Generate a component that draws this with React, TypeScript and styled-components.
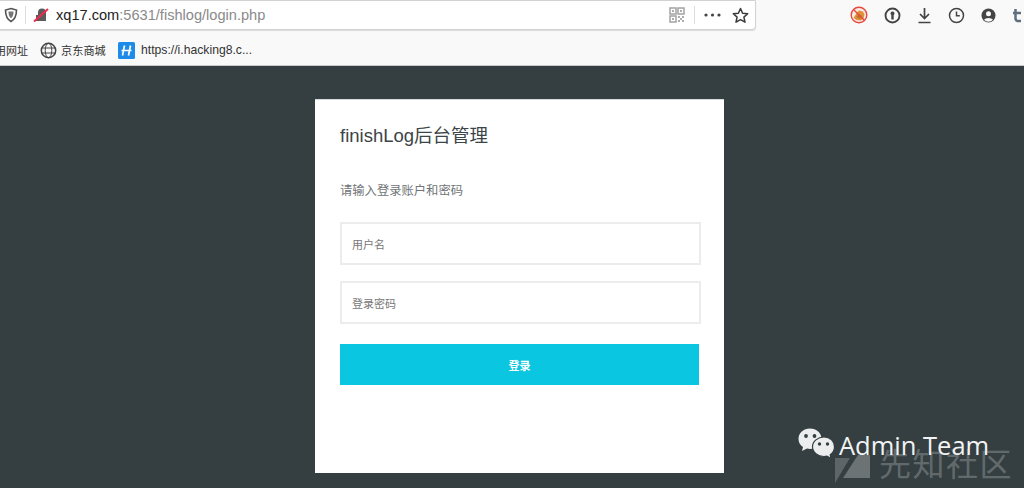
import React from "react";
import styled, { createGlobalStyle } from "styled-components";

const sans = `"Liberation Sans", "Noto Sans CJK SC", sans-serif`;

const Global = createGlobalStyle`
  html, body { margin: 0; padding: 0; width: 1024px; height: 488px; overflow: hidden; background: #353f42; }
  * { box-sizing: border-box; }
  #root { width: 1024px; height: 488px; }
`;

const Page = styled.div`
  position: relative;
  width: 1024px;
  height: 488px;
  display: flex;
  flex-direction: column;
  font-family: ${sans};
  overflow: hidden;
`;

const Chrome = styled.header`
  height: 66px;
  flex: none;
  background: #f9f9f9;
  border-bottom: 1px solid #c9cbcb;
`;

const Toolbar = styled.div`
  height: 33px;
  display: flex;
  align-items: flex-start;
`;

const UrlBar = styled.div`
  width: 759px;
  height: 30px;
  margin-left: -1px;
  background: #fff;
  border: 1px solid #d2d2d2;
  border-radius: 0 0 4px 0;
  box-shadow: 0 1px 1px rgba(0, 0, 0, 0.12);
  display: flex;
  align-items: center;
  padding: 0 6px 0 4px;
`;

const Divider = styled.span<{ $gap: number }>`
  width: 1px;
  height: 18px;
  background: #dcdcdc;
  margin: 0 ${(p) => p.$gap}px;
`;

const Url = styled.div`
  font-size: 14.600px;
  margin-left: 6px;
  color: #8a8a8a;
  flex: 1;
  white-space: nowrap;
  b { font-weight: 400; color: #222; }
`;

const StarSlot = styled.span`
  display: flex;
  margin-left: 11px;
`;

const ToolIcons = styled.div`
  height: 30px;
  display: flex;
  align-items: center;
  gap: 16px;
  margin-left: 94px;
`;

const Bookmarks = styled.div`
  height: 32px;
  display: flex;
  align-items: center;
  padding-top: 2px;
  font-size: 11px;
  color: #333;
  overflow: hidden;
`;

const Bookmark = styled.div<{ $width: number; $gap?: number; $size?: number }>`
  width: ${(p) => p.$width}px;
  flex: none;
  display: flex;
  align-items: center;
  gap: ${(p) => p.$gap ?? 4}px;
  font-size: ${(p) => p.$size ?? 11}px;
  white-space: nowrap;
`;

const ClippedBookmark = styled(Bookmark)`
  margin-left: -16px;
`;

const Main = styled.main`
  flex: 1;
  display: flex;
  justify-content: center;
  align-items: flex-start;
  padding-top: 33px;
  padding-left: 15px;
`;

const Card = styled.section`
  width: 409px;
  height: 374px;
  flex: none;
  background: #fff;
  padding: 25px 24px 0 25px;
  border-top: 1px solid #d8dbdc;
  display: flex;
  flex-direction: column;
`;

const Title = styled.h1`
  margin: 0;
  font-size: 18.500px;
  line-height: 22px;
  font-weight: 400;
  color: #3b4447;
`;

const Hint = styled.p`
  margin: 36px 0 0;
  font-size: 12.300px;
  line-height: 16px;
  color: #6f7476;
`;

const Fields = styled.div`
  margin-top: 23px;
  display: flex;
  flex-direction: column;
  gap: 16px;
`;

const Field = styled.div`
  width: 361px;
  height: 43px;
  border: 2px solid #ebecec;
  display: flex;
  align-items: center;
  padding-left: 10px;
  font-size: 11px;
  color: #777;
`;

const Submit = styled.button`
  width: 359px;
  height: 41px;
  margin-top: 20px;
  border: none;
  background: #0bc6e0;
  color: #fff;
  font-family: ${sans};
  font-size: 11px;
  font-weight: 700;
  padding: 0;
`;

const Watermark = styled.div`
  position: absolute;
  left: 797px;
  top: 425px;
  width: 227px;
  height: 63px;
`;

const Brand = styled.div`
  position: absolute;
  left: 42px;
  top: 4px;
  font-family: "Open Sans", "Noto Sans", sans-serif;
  font-size: 25.500px;
  line-height: 32px;
  color: #f2f3f3;
  white-space: nowrap;
`;

const Site = styled.div`
  position: absolute;
  left: 82px;
  top: 17px;
  font-family: "Noto Sans CJK SC", sans-serif;
  font-size: 32px;
  line-height: 40px;
  letter-spacing: 1.500px;
  color: rgba(255, 255, 255, 0.24);
  white-space: nowrap;
`;

const WeChatBox = styled.div`
  position: absolute;
  left: 1px;
  top: 3px;
  display: flex;
`;

const SiteMarkBox = styled.div`
  position: absolute;
  left: 38px;
  top: 30px;
  display: flex;
`;

const Shield = () => (
  <svg width="14" height="16" viewBox="0 0 14 16">
    <path d="M7 1.500 12.500 3c0 5-1 9-5.500 11.500C2.500 12 1.500 8 1.500 3Z" fill="none" stroke="#555" strokeWidth="1.600" />
    <path d="M4.500 4.500h5c0 3-.5 5.300-2.500 6.800-2-1.500-2.500-3.800-2.500-6.800Z" fill="#777" />
  </svg>
);

const BrokenLock = () => (
  <svg width="17" height="16" viewBox="0 0 17 16">
    <path d="M3 14V8h2V5.500a4 4 0 0 1 8 0V14Z" fill="#5b5b5b" />
    <path d="M1 14.500 15 2" stroke="#f2294f" strokeWidth="2" />
  </svg>
);

const QrCode = () => (
  <svg width="16" height="16" viewBox="0 0 16 16" opacity="0.6">
    <path d="M1 1h6v6H1ZM9 1h6v6H9ZM1 9h6v6H1Z" fill="none" stroke="#666" strokeWidth="1.500" />
    <path d="M9 9h2v2H9ZM13 9h2v2h-2ZM11 11h2v2h-2ZM9 13h2v2H9ZM13 13h2v2h-2ZM3 3h2v2H3ZM11 3h2v2h-2ZM3 11h2v2H3Z" fill="#777" />
  </svg>
);

const Dots = () => (
  <svg width="17" height="4" viewBox="0 0 17 4">
    <circle cx="2" cy="2" r="1.600" fill="#444" />
    <circle cx="8.500" cy="2" r="1.600" fill="#444" />
    <circle cx="15" cy="2" r="1.600" fill="#444" />
  </svg>
);

const Star = () => (
  <svg width="17" height="17" viewBox="0 0 17 17">
    <path d="M8.500 1.500 10.600 6.200 15.700 6.700 11.900 10.100 13 15.200 8.500 12.600 4 15.200 5.100 10.100 1.300 6.700 6.400 6.200Z" fill="none" stroke="#3a3a3a" strokeWidth="1.500" strokeLinejoin="round" />
  </svg>
);

const BlockedExt = () => (
  <svg width="18" height="18" viewBox="0 0 18 18">
    <circle cx="9" cy="9" r="7.500" fill="#f7ece4" />
    <path d="M3.500 12 7 6.500l2-2 4 1 1.500 3-1 4-3 2-4-.5Z" fill="#e0913a" />
    <path d="M6 11l3-3 3 2-2 3Z" fill="#b9772d" />
    <circle cx="9" cy="9" r="7.800" fill="none" stroke="#e8483f" strokeWidth="1.400" />
    <path d="M3.500 3.500l11 11" stroke="#e8483f" strokeWidth="1.400" />
  </svg>
);

const KeyRing = () => (
  <svg width="17" height="17" viewBox="0 0 17 17">
    <circle cx="8.500" cy="8.500" r="7" fill="none" stroke="#444" strokeWidth="1.900" />
    <path d="M8.500 4.500a2 2 0 0 1 1.200 3.600V12.500H7.300V8.100A2 2 0 0 1 8.500 4.500Z" fill="#444" />
  </svg>
);

const Download = () => (
  <svg width="15" height="17" viewBox="0 0 15 17">
    <path d="M7.500 1v10M3 7l4.500 4.500L12 7M1.500 15.500h12" fill="none" stroke="#444" strokeWidth="1.700" />
  </svg>
);

const Clock = () => (
  <svg width="17" height="17" viewBox="0 0 17 17">
    <circle cx="8.500" cy="8.500" r="7" fill="none" stroke="#444" strokeWidth="1.500" />
    <path d="M8.500 4.500v4.300h3.300" fill="none" stroke="#444" strokeWidth="1.500" />
  </svg>
);

const Account = () => (
  <svg width="15" height="15" viewBox="0 0 15 15">
    <circle cx="7.500" cy="7.500" r="7" fill="#444" />
    <circle cx="7.500" cy="5.800" r="2.500" fill="#f9f9f9" />
    <path d="M3 11.700a5 3.200 0 0 1 9 0 6 6 0 0 1-9 0Z" fill="#f9f9f9" />
  </svg>
);

const NextExt = () => (
  <svg width="12" height="15" viewBox="0 0 12 15">
    <path d="M3.500 1v9.500a2.500 2.500 0 0 0 2.500 2.500h3M1 5h8" fill="none" stroke="#5f6f7f" strokeWidth="2.500" />
  </svg>
);

const Globe = () => (
  <svg width="17" height="17" viewBox="0 0 17 17">
    <circle cx="8.500" cy="8.500" r="7.200" fill="none" stroke="#444" strokeWidth="1.500" />
    <ellipse cx="8.500" cy="8.500" rx="3.300" ry="7.200" fill="none" stroke="#444" strokeWidth="1" />
    <path d="M1.500 6h14M1.500 11h14" stroke="#444" strokeWidth="1" />
  </svg>
);

const HackingIcon = () => (
  <svg width="17" height="17" viewBox="0 0 17 17">
    <rect width="17" height="17" rx="1.500" fill="#1f8be8" />
    <path d="M6.500 3.500 4.500 13.500M12.500 3.500 10.500 13.500M3.500 8.500h10" fill="none" stroke="#fff" strokeWidth="1.700" />
  </svg>
);

const WeChat = () => (
  <svg width="38" height="31" viewBox="0 0 38 31">
    <path d="M12 .5C5.500.5.500 5 .500 11c0 3.500 1.800 6.300 4.500 8l-1 4 5-2.500c1 .3 2 .4 3 .4C18.500 20.900 23.500 16.500 23.500 11 23.500 5 18.500.5 12 .5Z" fill="#eceded" />
    <circle cx="8" cy="8" r="1.900" fill="#353f42" />
    <circle cx="16.500" cy="8" r="1.900" fill="#353f42" />
    <path d="M26 9c-6.300 0-11.500 4.300-11.500 9.800S19.700 28.500 26 28.500c1 0 2-.1 3-.4l4 2.400-.8-3.800c2.800-1.900 4.300-4.700 4.300-7.900C36.500 13.300 32.300 9 26 9Z" fill="#eceded" stroke="#353f42" strokeWidth="1.200" />
    <circle cx="21.500" cy="16" r="1.700" fill="#353f42" />
    <circle cx="29.500" cy="16" r="1.700" fill="#353f42" />
  </svg>
);

const SiteMark = () => (
  <svg width="35" height="28" viewBox="0 0 35 28">
    <path d="M0 3H15L0 28Z" fill="rgba(255,255,255,0.2)" />
    <path d="M23 0H35V23H8Z" fill="rgba(255,255,255,0.27)" />
  </svg>
);

export default function App() {
  return (
    <Page>
      <Global />
      <Chrome>
        <Toolbar>
          <UrlBar>
            <Shield />
            <Divider $gap={7} />
            <BrokenLock />
            <Url>
              <b>xq17.com</b>:5631/fishlog/login.php
            </Url>
            <QrCode />
            <Divider $gap={9} />
            <Dots />
            <StarSlot>
              <Star />
            </StarSlot>
          </UrlBar>
          <ToolIcons>
            <BlockedExt />
            <KeyRing />
            <Download />
            <Clock />
            <Account />
            <NextExt />
          </ToolIcons>
        </Toolbar>
        <Bookmarks>
          <ClippedBookmark $width={56}>常用网址</ClippedBookmark>
          <Bookmark $width={78} $size={11.200}>
            <Globe />
            京东商城
          </Bookmark>
          <Bookmark $width={150} $gap={6} $size={12.200}>
            <HackingIcon />
            https://i.hacking8.c...
          </Bookmark>
        </Bookmarks>
      </Chrome>
      <Main>
        <Card>
          <Title>finishLog后台管理</Title>
          <Hint>请输入登录账户和密码</Hint>
          <Fields>
            <Field>用户名</Field>
            <Field>登录密码</Field>
          </Fields>
          <Submit>登录</Submit>
        </Card>
      </Main>
      <Watermark>
        <WeChatBox>
          <WeChat />
        </WeChatBox>
        <SiteMarkBox>
          <SiteMark />
        </SiteMarkBox>
        <Site>先知社区</Site>
        <Brand>Admin Team</Brand>
      </Watermark>
    </Page>
  );
}
